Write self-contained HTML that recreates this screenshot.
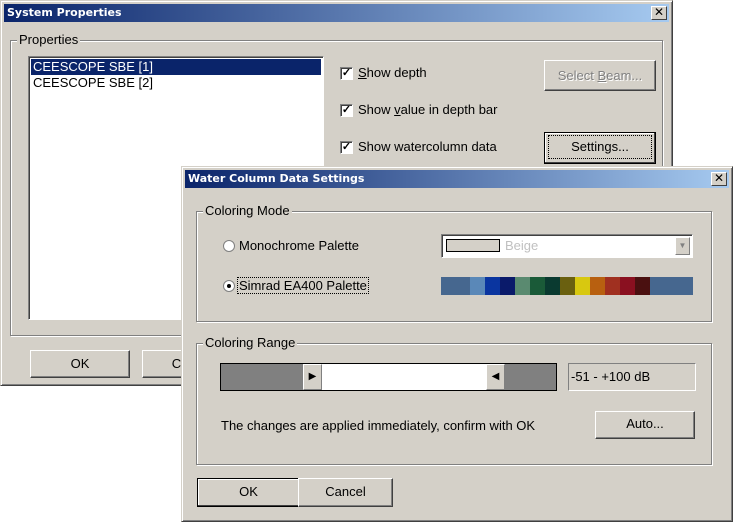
<!DOCTYPE html>
<html><head><style>
*{box-sizing:border-box;margin:0;padding:0}
body{width:734px;height:523px;background:#fff;position:relative;overflow:hidden;font-family:"Liberation Sans",Arial,sans-serif;font-size:13px;color:#000}
.a{position:absolute}
.win{position:absolute;background:#d4d0c8;border:1px solid;border-color:#d4d0c8 #404040 #404040 #d4d0c8;box-shadow:inset 1px 1px 0 #fff,inset -1px -1px 0 #808080}
.title{position:absolute;left:3px;right:3px;top:3px;height:18px;background:linear-gradient(to right,#0a246a,#a6caf0);color:#fff;font-weight:bold;font-family:"DejaVu Sans",sans-serif;font-size:11px;line-height:18px;padding-left:3px}
.x{position:absolute;right:2px;top:2px;width:16px;height:14px;background:#d4d0c8;border:1px solid;border-color:#fff #404040 #404040 #fff;color:#000;font-size:12px;line-height:11px;text-align:center;font-weight:bold}
.grp{position:absolute;border:1px solid #808080;box-shadow:1px 1px 0 #fff,inset 1px 1px 0 #fff}
.leg{position:absolute;top:-8px;left:6px;background:#d4d0c8;padding:0 2px;font-size:13px;line-height:14px}
.btn{position:absolute;background:#d4d0c8;border:1px solid;border-color:#fff #404040 #404040 #fff;box-shadow:inset -1px -1px 0 #808080;text-align:center;font-size:13px}
.cb{position:absolute;width:13px;height:13px;background:#fff;border:1px solid;border-color:#808080 #fff #fff #808080;box-shadow:inset 1px 1px 0 #404040;font-size:11px;line-height:10px;text-align:center;font-weight:bold}
.rad{position:absolute;width:12px;height:12px;border-radius:50%;background:#fff;border:1px solid #808080}
</style></head><body>

<div class="win" style="left:0;top:0;width:673px;height:386px">
 <div class="title">System Properties<div class="x">✕</div></div>
 <div class="grp" style="left:9px;top:39px;width:653px;height:296px"><div class="leg">Properties</div></div>
 <div class="a" style="left:27px;top:55px;width:296px;height:264px;background:#fff;border:1px solid;border-color:#808080 #fff #fff #808080;box-shadow:inset 1px 1px 0 #404040">
  <div class="a" style="left:2px;top:2px;right:2px;height:16px;background:#0a246a;color:#fff;padding-left:2px;line-height:16px">CEESCOPE SBE [1]</div>
  <div class="a" style="left:2px;top:18px;padding-left:2px;line-height:16px">CEESCOPE SBE [2]</div>
 </div>
 <div class="cb" style="left:339px;top:66px">✓</div><div class="a" style="left:357px;top:64px"><u>S</u>how depth</div>
 <div class="cb" style="left:339px;top:103px">✓</div><div class="a" style="left:357px;top:101px">Show <u>v</u>alue in depth bar</div>
 <div class="cb" style="left:339px;top:140px">✓</div><div class="a" style="left:357px;top:138px">Show watercolumn data</div>
 <div class="btn" style="left:543px;top:59px;width:112px;height:31px;line-height:29px;color:#808080;text-shadow:1px 1px 0 #fff">Select <u>B</u>eam...</div>
 <div class="btn" style="left:543px;top:131px;width:112px;height:32px;line-height:28px;border:1px solid #000;box-shadow:inset -1px -1px 0 #404040,inset 1px 1px 0 #fff"><span style="outline:1px dotted #000;display:inline-block;width:102px;line-height:22px">Settings...</span></div>
 <div class="btn" style="left:29px;top:349px;width:100px;height:28px;line-height:26px">OK</div>
 <div class="btn" style="left:141px;top:349px;width:100px;height:28px;line-height:26px">Cancel</div>
</div>

<div class="win" style="left:181px;top:166px;width:552px;height:356px">
 <div class="title" style="top:3px">Water Column Data Settings<div class="x">✕</div></div>
 <div class="grp" style="left:14px;top:44px;width:516px;height:111px"><div class="leg">Coloring Mode</div></div>
 <div class="rad" style="left:41px;top:73px"></div><div class="a" style="left:57px;top:71px">Monochrome Palette</div>
 <div class="rad" style="left:41px;top:113px"><div class="a" style="left:3px;top:3px;width:4px;height:4px;background:#000;border-radius:50%"></div></div>
 <div class="a" style="left:56px;top:111px;outline:1px dotted #000;padding:0 1px;line-height:15px">Simrad EA400 Palette</div>
 <div class="a" style="left:259px;top:67px;width:252px;height:24px;background:#fff;border:1px solid;border-color:#808080 #fff #fff #808080;box-shadow:inset 1px 1px 0 #404040">
  <div class="a" style="left:4px;top:4px;width:54px;height:13px;border:1px solid #000;background:#d4d0c8"></div>
  <div class="a" style="left:63px;top:3px;color:#c0c0c0">Beige</div>
  <div class="a" style="right:2px;top:2px;width:15px;height:18px;background:#d4d0c8;border:1px solid;border-color:#fff #808080 #808080 #fff;color:#808080;font-size:8px;text-align:center;line-height:16px">▼</div>
 </div>
 <div class="a" style="left:259px;top:110px;width:252px;height:18px;display:flex;background:#46678f">
  <div style="width:29px"></div><div style="width:15px;background:#5a88b8"></div><div style="width:15px;background:#0a35a0"></div><div style="width:15px;background:#0a1a6a"></div><div style="width:15px;background:#5a8a70"></div><div style="width:15px;background:#1a5a38"></div><div style="width:15px;background:#0a3a30"></div><div style="width:15px;background:#6a6010"></div><div style="width:15px;background:#d8c810"></div><div style="width:15px;background:#b86010"></div><div style="width:15px;background:#a03020"></div><div style="width:15px;background:#8a1020"></div><div style="width:15px;background:#4a1010"></div>
 </div>
 <div class="grp" style="left:14px;top:176px;width:516px;height:122px"><div class="leg">Coloring Range</div></div>
 <div class="a" style="left:38px;top:196px;width:337px;height:28px;border:1px solid #000;background:#808080">
  <div class="a" style="left:82px;top:0;width:19px;height:26px;background:#d4d0c8;border:1px solid;border-color:#fff #808080 #808080 #fff;font-size:10px;line-height:24px;text-align:center">▶</div>
  <div class="a" style="left:101px;top:0;width:164px;height:26px;background:#fff"></div>
  <div class="a" style="left:265px;top:0;width:19px;height:26px;background:#d4d0c8;border:1px solid;border-color:#fff #808080 #808080 #fff;font-size:10px;line-height:24px;text-align:center">◀</div>
 </div>
 <div class="a" style="left:386px;top:196px;width:128px;height:28px;border:1px solid;border-color:#808080 #fff #fff #808080;padding-left:2px;line-height:26px">-51 - +100 dB</div>
 <div class="a" style="left:39px;top:251px">The changes are applied immediately, confirm with OK</div>
 <div class="btn" style="left:413px;top:244px;width:100px;height:28px;line-height:24px">Auto...</div>
 <div class="btn" style="left:15px;top:311px;width:103px;height:29px;line-height:26px;border:1px solid #000;box-shadow:inset -1px -1px 0 #404040,inset 1px 1px 0 #fff">OK</div>
 <div class="btn" style="left:116px;top:311px;width:95px;height:29px;line-height:26px">Cancel</div>
</div>
</body></html>
